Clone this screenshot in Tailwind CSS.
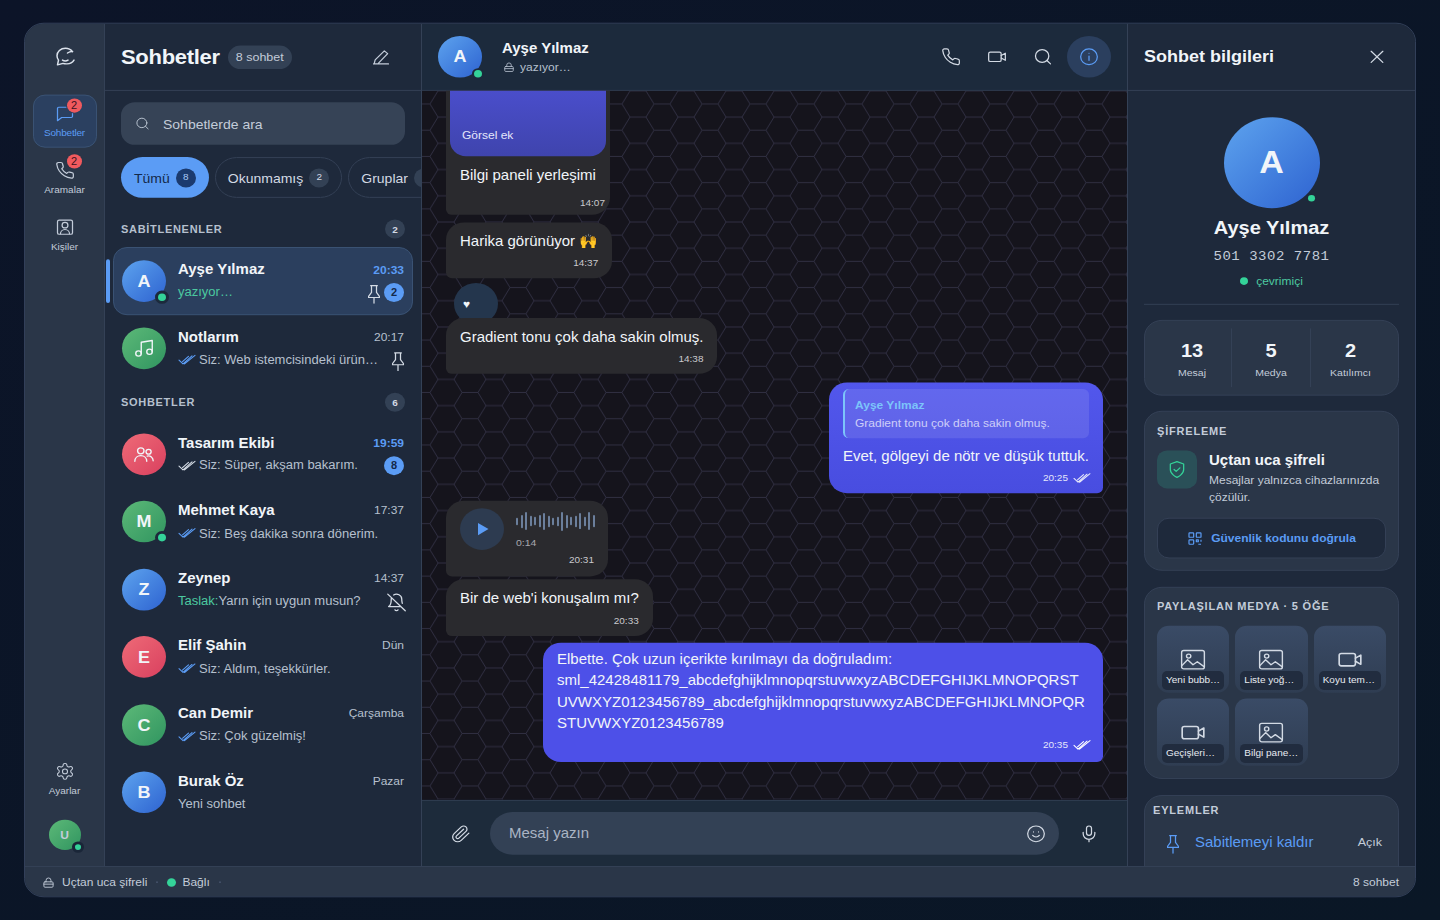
<!doctype html>
<html>

<head>
  <meta charset="UTF-8">
  <meta name="viewport" content="width=device-width, initial-scale=1.0">
  <script src="https://cdn.jsdelivr.net/npm/@tailwindcss/browser@4"></script>
</head>

<body class="bg-[#0b1425]">
  <!-- icons -->
  <svg class="hidden">
    <symbol id="i-logo" viewBox="0 0 24 24" fill="none" stroke="currentColor" stroke-width="1.5" stroke-linecap="round" stroke-linejoin="round"><path d="M19.5 6.5C18 4.500 15.500 3 12.500 3 7.500 3 4 6.500 4 11c0 1.800.6 3.300 1.500 4.500L4.500 20.500l5.500-1.500c1.200.4 2.500.6 4 .5 3-.2 5.500-1.500 7-4"/><path d="M19.500 6.500c-1.500-.2-3.500.5-5 1.500M9.500 15.500c1.500 1 4 1 5.500 0"/></symbol>
    <symbol id="i-chat" viewBox="0 0 24 24" fill="none" stroke="currentColor" stroke-width="1.5" stroke-linejoin="round"><path d="M3 5.500A1.500 1.500 0 0 1 4.500 4h15A1.500 1.500 0 0 1 21 5.500v10a1.500 1.500 0 0 1-1.500 1.500H8l-5 4z"/></symbol>
    <symbol id="i-phone" viewBox="0 0 24 24" fill="none" stroke="currentColor" stroke-width="1.500" stroke-linecap="round" stroke-linejoin="round"><path d="M22 16.920v3a2 2 0 0 1-2.180 2 19.790 19.790 0 0 1-8.630-3.070 19.500 19.500 0 0 1-6-6 19.790 19.790 0 0 1-3.070-8.670A2 2 0 0 1 4.110 2h3a2 2 0 0 1 2 1.720 12.840 12.840 0 0 0 .7 2.810 2 2 0 0 1-.45 2.110L8.090 9.910a16 16 0 0 0 6 6l1.270-1.270a2 2 0 0 1 2.110-.45 12.840 12.840 0 0 0 2.810.7A2 2 0 0 1 22 16.920z"/></symbol>
    <symbol id="i-contact" viewBox="0 0 24 24" fill="none" stroke="currentColor" stroke-width="1.500" stroke-linejoin="round"><rect x="3" y="3" width="18" height="18" rx="2"/><circle cx="12" cy="9.500" r="3.500"/><path d="M6.500 21c0-3.500 2.500-6 5.500-6s5.500 2.500 5.500 6"/></symbol>
    <symbol id="i-gear" viewBox="0 0 24 24" fill="none" stroke="currentColor" stroke-width="1.300" stroke-linejoin="round"><path d="M12.220 2h-.44a2 2 0 0 0-2 2v.18a2 2 0 0 1-1 1.730l-.43.25a2 2 0 0 1-2 0l-.15-.08a2 2 0 0 0-2.730.73l-.22.38a2 2 0 0 0 .73 2.730l.15.1a2 2 0 0 1 1 1.720v.51a2 2 0 0 1-1 1.740l-.15.09a2 2 0 0 0-.73 2.730l.22.38a2 2 0 0 0 2.730.73l.15-.08a2 2 0 0 1 2 0l.43.25a2 2 0 0 1 1 1.730V20a2 2 0 0 0 2 2h.44a2 2 0 0 0 2-2v-.18a2 2 0 0 1 1-1.730l.43-.25a2 2 0 0 1 2 0l.15.08a2 2 0 0 0 2.730-.73l.22-.39a2 2 0 0 0-.73-2.730l-.15-.08a2 2 0 0 1-1-1.740v-.5a2 2 0 0 1 1-1.740l.15-.09a2 2 0 0 0 .73-2.730l-.22-.38a2 2 0 0 0-2.730-.73l-.15.08a2 2 0 0 1-2 0l-.43-.25a2 2 0 0 1-1-1.730V4a2 2 0 0 0-2-2z"/><circle cx="12" cy="12" r="3"/></symbol>
    <symbol id="i-edit" viewBox="0 0 24 24" fill="none" stroke="currentColor" stroke-width="1.500" stroke-linecap="round" stroke-linejoin="round"><path d="M3 21h18M4 20l1-4L16 4.500l4 3.500L9 20"/></symbol>
    <symbol id="i-search" viewBox="0 0 24 24" fill="none" stroke="currentColor" stroke-width="1.500" stroke-linecap="round"><circle cx="11" cy="11" r="8"/><path d="m21 21-4.300-4.300"/></symbol>
    <symbol id="i-pin" viewBox="0 0 24 24" fill="none" stroke="currentColor" stroke-width="1.500" stroke-linecap="round" stroke-linejoin="round"><path d="M8 1h8M9 1v8.500L5.500 14.500V16h13v-1.500L15 9.500V1M12 16v8"/></symbol>
    <symbol id="i-music" viewBox="0 0 24 24" fill="none" stroke="currentColor" stroke-width="1.500" stroke-linecap="round" stroke-linejoin="round"><path d="M9 18V5l12-2v13"/><circle cx="6" cy="18" r="3"/><circle cx="18" cy="16" r="3"/></symbol>
    <symbol id="i-users" viewBox="0 0 24 24" fill="none" stroke="currentColor" stroke-width="1.500" stroke-linecap="round" stroke-linejoin="round"><circle cx="8.500" cy="8" r="3.500"/><circle cx="17" cy="9" r="2.800"/><path d="M2 20c0-4 3-6.500 6.500-6.500S15 16 15 20M15.500 14c3.500-.8 6.500 1.500 6.500 5.500"/></symbol>
    <symbol id="i-belloff" viewBox="0 0 24 24" fill="none" stroke="currentColor" stroke-width="1.500" stroke-linecap="round" stroke-linejoin="round"><path d="M8.700 3A6 6 0 0 1 18 8a21.300 21.300 0 0 0 .6 5M17 17H3s3-2 3-9a4.670 4.670 0 0 1 .3-1.700M10.300 21a1.940 1.940 0 0 0 3.400 0M2 2l20 20"/></symbol>
    <symbol id="i-check2" viewBox="0 0 18 12" fill="none" stroke="currentColor" stroke-width="1.100" stroke-linecap="round" stroke-linejoin="round"><path d="M1 6.500 5 10.500 14 2M6.500 10.500 17 1.500M4.500 8 10.500 2.500"/></symbol>
    <symbol id="i-lock" viewBox="0 0 24 24" fill="none" stroke="currentColor" stroke-width="1.700" stroke-linecap="round" stroke-linejoin="round"><rect x="3.500" y="10.500" width="17" height="10.500" rx="2"/><path d="M7.500 10.500V7.500a4.500 4.500 0 0 1 9 0v3M3.500 15h17"/></symbol>
    <symbol id="i-video" viewBox="0 0 24 24" fill="none" stroke="currentColor" stroke-width="1.500" stroke-linecap="round" stroke-linejoin="round"><rect x="2" y="6" width="15" height="12" rx="2"/><path d="m17 10.500 5-3v9l-5-3"/></symbol>
    <symbol id="i-info" viewBox="0 0 24 24" fill="none" stroke="currentColor" stroke-width="1.500" stroke-linecap="round"><circle cx="12" cy="12" r="10"/><path d="M12 16.500V11M12 7.500h.01"/></symbol>
    <symbol id="i-clip" viewBox="0 0 24 24" fill="none" stroke="currentColor" stroke-width="1.500" stroke-linecap="round" stroke-linejoin="round"><path d="m21.440 11.050-9.190 9.190a6 6 0 0 1-8.490-8.490l8.570-8.570A4 4 0 1 1 18 8.840l-8.590 8.570a2 2 0 0 1-2.830-2.830l8.490-8.480"/></symbol>
    <symbol id="i-smile" viewBox="0 0 24 24" fill="none" stroke="currentColor" stroke-width="1.500" stroke-linecap="round"><circle cx="12" cy="12" r="10"/><path d="M8 14s1.500 2 4 2 4-2 4-2M9 9.500h.01M15 9.500h.01"/></symbol>
    <symbol id="i-mic" viewBox="0 0 24 24" fill="none" stroke="currentColor" stroke-width="1.500" stroke-linecap="round"><rect x="9" y="2" width="6" height="12" rx="3"/><path d="M19 10v2a7 7 0 0 1-14 0v-2M12 19v3"/></symbol>
    <symbol id="i-x" viewBox="0 0 24 24" fill="none" stroke="currentColor" stroke-width="1.500" stroke-linecap="round"><path d="M5 5l14 14M19 5 5 19"/></symbol>
    <symbol id="i-shield" viewBox="0 0 24 24" fill="none" stroke="currentColor" stroke-width="1.500" stroke-linecap="round" stroke-linejoin="round"><path d="M12 22s8-3.500 8-10V5l-8-3-8 3v7c0 6.500 8 10 8 10z"/><path d="m8.500 12 2.500 2.500 4.500-4.500"/></symbol>
    <symbol id="i-qr" viewBox="0 0 24 24" fill="none" stroke="currentColor" stroke-width="1.800" stroke-linejoin="round"><rect x="3" y="3" width="7" height="7" rx="1"/><rect x="14" y="3" width="7" height="7" rx="1"/><rect x="3" y="14" width="7" height="7" rx="1"/><path d="M14 14h3v3h-3zM21 14v3M17 21h4M14 21h.01"/></symbol>
    <symbol id="i-image" viewBox="0 0 24 24" fill="none" stroke="currentColor" stroke-width="1.300" stroke-linejoin="round"><rect x="1.500" y="3" width="21" height="18" rx="2"/><circle cx="8" cy="8.500" r="2"/><path d="m1.500 18 5.500-6 5 5 4-3 6.500 5"/></symbol>
  </svg>

  <div class="h-[920px] overflow-hidden">
  <div class="h-[972px] origin-top scale-y-[0.9465] bg-linear-to-br from-[#0c1428] to-[#0a1726] p-6 font-['Liberation_Sans',sans-serif] text-[#f1f5f9]">
    <div class="flex h-[924px] w-[1392px] flex-col overflow-hidden rounded-[20px] border border-[#33415a] bg-[#1e293b]">
      <div class="flex min-h-0 flex-1">

        <!-- rail -->
        <nav class="flex w-20 shrink-0 flex-col items-center border-r border-[#344156] bg-[#2a3648] text-[#c3ccd9]">
          <div class="flex h-[70px] shrink-0 items-center justify-center">
            <svg class="h-6 w-6 text-[#dbe2ec]"><use href="#i-logo"/></svg>
          </div>
          <div class="mt-[5px] flex flex-col gap-1">
            <a class="relative flex h-14 w-16 flex-col items-center rounded-xl border border-[#3b5374] bg-[#2b4060] pt-[9px] text-[#5b9cf5]">
              <svg class="h-5 w-5"><use href="#i-chat"/></svg>
              <span class="mt-[5px] text-[10px] leading-3 tracking-[-0.2px]">Sohbetler</span>
              <span class="absolute left-[33px] top-[3px] flex h-[15px] w-[15px] items-center justify-center rounded-full bg-[#f05a5e] text-[11px] text-[#3b1220] ring-1 ring-[#2b4060]">2</span>
            </a>
            <a class="relative flex h-14 w-16 flex-col items-center pt-[10px]">
              <svg class="h-5 w-5"><use href="#i-phone"/></svg>
              <span class="mt-[5px] text-[10px] leading-3">Aramalar</span>
              <span class="absolute left-[34px] top-[3px] flex h-[15px] w-[15px] items-center justify-center rounded-full bg-[#f05a5e] text-[11px] text-[#3b1220] ring-1 ring-[#2a3648]">2</span>
            </a>
            <a class="flex h-14 w-16 flex-col items-center pt-[10px]">
              <svg class="h-5 w-5"><use href="#i-contact"/></svg>
              <span class="mt-[5px] text-[10px] leading-3">Kişiler</span>
            </a>
          </div>
          <a class="mt-auto flex h-14 w-16 flex-col items-center pt-[11px]">
            <svg class="h-5 w-5"><use href="#i-gear"/></svg>
            <span class="mt-[5px] text-[10px] leading-3">Ayarlar</span>
          </a>
          <div class="relative mb-[17px] mt-4 flex h-8 w-8 items-center justify-center rounded-full bg-linear-to-br from-[#5cb978] to-[#2f9560] text-xs font-bold">
            U
            <span class="absolute -bottom-[3px] -right-[3px] h-3 w-3 rounded-full border-[3px] border-[#1a2638] bg-[#34d399]"></span>
          </div>
        </nav>

        <!-- chat list -->
        <aside class="flex w-[317px] shrink-0 flex-col overflow-hidden border-r border-[#344156] bg-[#1e293b]">
          <header class="flex h-[71px] shrink-0 items-center border-b border-[#344156] pl-4 pr-[30px]">
            <h1 class="text-[22px] font-bold tracking-[-0.3px]">Sohbetler</h1>
            <span class="ml-2 rounded-full bg-[#334155] px-2 py-[4px] text-[12.5px] leading-[17px] text-[#c3ccd9]">8 sohbet</span>
            <svg class="ml-auto h-5 w-5 text-[#c3ccd9]"><use href="#i-edit"/></svg>
          </header>

          <div class="mx-4 mt-3 flex h-[45px] shrink-0 items-center rounded-[14px] bg-[#364356] pl-[14px] text-sm text-[#c3ccd9]">
            <svg class="h-[15px] w-[15px]"><use href="#i-search"/></svg>
            <span class="ml-[13px]">Sohbetlerde ara</span>
          </div>

          <div class="ml-4 mt-[13px] flex h-[43px] shrink-0 gap-[6px] text-sm">
            <span class="flex shrink-0 items-center gap-[6px] rounded-full bg-[#5b9cf5] pl-[13px] pr-[13px] text-[#14294a]">Tümü <b class="flex h-5 w-5 items-center justify-center rounded-full bg-[#1b3a6e] text-[10px] font-normal text-[#a8c8f5]">8</b></span>
            <span class="flex shrink-0 items-center gap-[6px] rounded-full border border-[#344156] pl-3 pr-3 text-[#d3dae4]">Okunmamış <b class="flex h-5 w-5 items-center justify-center rounded-full bg-[#334155] text-[10px] font-normal">2</b></span>
            <span class="flex shrink-0 items-center gap-[6px] rounded-full border border-[#344156] pl-3 pr-3 text-[#d3dae4]">Gruplar <b class="h-5 w-5 rounded-full bg-[#334155]"></b></span>
          </div>

          <div class="ml-4 mr-4 mt-[12px] flex h-[40px] shrink-0 items-center justify-between pt-[2px] text-[11px] font-bold tracking-[0.7px] text-[#b6c0ce]">
            <span>SABİTLENENLER</span>
            <b class="flex h-5 w-5 items-center justify-center rounded-full bg-[#334155] text-[10px] tracking-normal text-[#d3dae4]">2</b>
          </div>

          <div class="relative">
            <span class="absolute left-[1px] top-[13px] h-[46px] w-1 rounded-full bg-[#5b9cf5]"></span>
            <div class="mx-2 flex h-[71.5px] items-center gap-3 rounded-[14px] border border-[#3b5374] bg-[#2b3f5e] px-2">
              <div class="relative flex h-11 w-11 shrink-0 items-center justify-center rounded-full bg-linear-to-br from-[#5ea3ee] to-[#2f62d0] text-lg font-bold">A
                <span class="absolute -bottom-[2px] -right-[3px] h-[14px] w-[14px] rounded-full border-[3px] border-[#1c2a3c] bg-[#34d399]"></span>
              </div>
              <div class="min-w-0 flex-1">
                <div class="flex h-5 items-center justify-between"><b class="text-[15px]">Ayşe Yılmaz</b><b class="text-xs text-[#5b9cf5]">20:33</b></div>
                <div class="mt-1 flex h-5 items-center text-[13px] text-[#4cc9a0]">yazıyor…
                  <svg class="ml-auto mt-1 h-5 w-5 text-[#d3dae4]"><use href="#i-pin"/></svg>
                  <b class="flex h-5 w-5 items-center justify-center rounded-full bg-[#5b9cf5] text-[11px] text-[#14294a]">2</b>
                </div>
              </div>
            </div>
          </div>

          <div class="mx-2 flex h-[71.5px] shrink-0 items-center gap-3 px-[9px]">
            <div class="flex h-11 w-11 shrink-0 items-center justify-center rounded-full bg-linear-to-br from-[#5cb978] to-[#2f9560]"><svg class="h-[22px] w-[22px]"><use href="#i-music"/></svg></div>
            <div class="min-w-0 flex-1">
              <div class="flex h-5 items-center justify-between"><b class="text-[15px]">Notlarım</b><span class="text-xs text-[#b6c0ce]">20:17</span></div>
              <div class="mt-1 flex h-5 items-center text-[13px] text-[#b6c0ce]"><svg class="mr-[3px] h-3 w-[18px] shrink-0 text-[#5b9cf5]"><use href="#i-check2"/></svg><span class="truncate">Siz: Web istemcisindeki ürün…</span>
                <svg class="-mr-1 ml-auto mt-1 h-5 w-5 shrink-0 text-[#d3dae4]"><use href="#i-pin"/></svg>
              </div>
            </div>
          </div>

          <div class="ml-4 mr-4 flex h-[40px] shrink-0 items-center justify-between pt-[2px] text-[11px] font-bold tracking-[0.7px] text-[#b6c0ce]">
            <span>SOHBETLER</span>
            <b class="flex h-5 w-5 items-center justify-center rounded-full bg-[#334155] text-[10px] tracking-normal text-[#d3dae4]">6</b>
          </div>

          <div class="mx-2 flex h-[71.5px] shrink-0 items-center gap-3 px-[9px]">
            <div class="flex h-11 w-11 shrink-0 items-center justify-center rounded-full bg-linear-to-br from-[#ee6a77] to-[#d93f5f]"><svg class="h-[22px] w-[22px]"><use href="#i-users"/></svg></div>
            <div class="min-w-0 flex-1">
              <div class="flex h-5 items-center justify-between"><b class="text-[15px]">Tasarım Ekibi</b><b class="text-xs text-[#5b9cf5]">19:59</b></div>
              <div class="mt-1 flex h-5 items-center text-[13px] text-[#b6c0ce]"><svg class="mr-[3px] h-3 w-[18px] shrink-0 text-[#d3dae4]"><use href="#i-check2"/></svg>Siz: Süper, akşam bakarım.
                <b class="ml-auto flex h-5 w-5 items-center justify-center rounded-full bg-[#5b9cf5] text-[11px] text-[#14294a]">8</b>
              </div>
            </div>
          </div>

          <div class="mx-2 flex h-[71.5px] shrink-0 items-center gap-3 px-[9px]">
            <div class="relative flex h-11 w-11 shrink-0 items-center justify-center rounded-full bg-linear-to-br from-[#5cb978] to-[#2f9560] text-lg font-bold">M
              <span class="absolute -bottom-[2px] -right-[3px] h-[14px] w-[14px] rounded-full border-[3px] border-[#1e293b] bg-[#34d399]"></span>
            </div>
            <div class="min-w-0 flex-1">
              <div class="flex h-5 items-center justify-between"><b class="text-[15px]">Mehmet Kaya</b><span class="text-xs text-[#b6c0ce]">17:37</span></div>
              <div class="mt-1 flex h-5 items-center text-[13px] text-[#b6c0ce]"><svg class="mr-[3px] h-3 w-[18px] shrink-0 text-[#5b9cf5]"><use href="#i-check2"/></svg>Siz: Beş dakika sonra dönerim.</div>
            </div>
          </div>

          <div class="mx-2 flex h-[71.5px] shrink-0 items-center gap-3 px-[9px]">
            <div class="flex h-11 w-11 shrink-0 items-center justify-center rounded-full bg-linear-to-br from-[#5ea3ee] to-[#2f62d0] text-lg font-bold">Z</div>
            <div class="min-w-0 flex-1">
              <div class="flex h-5 items-center justify-between"><b class="text-[15px]">Zeynep</b><span class="text-xs text-[#b6c0ce]">14:37</span></div>
              <div class="mt-1 flex h-5 items-center text-[13px] text-[#b6c0ce]"><span class="text-[#4cc9a0]">Taslak:</span>Yarın için uygun musun?
                <svg class="-mr-[3px] ml-auto mt-[4px] h-[21px] w-[21px] text-[#d3dae4]"><use href="#i-belloff"/></svg>
              </div>
            </div>
          </div>

          <div class="mx-2 flex h-[71.5px] shrink-0 items-center gap-3 px-[9px]">
            <div class="flex h-11 w-11 shrink-0 items-center justify-center rounded-full bg-linear-to-br from-[#ee6a77] to-[#d93f5f] text-lg font-bold">E</div>
            <div class="min-w-0 flex-1">
              <div class="flex h-5 items-center justify-between"><b class="text-[15px]">Elif Şahin</b><span class="text-xs text-[#b6c0ce]">Dün</span></div>
              <div class="mt-1 flex h-5 items-center text-[13px] text-[#b6c0ce]"><svg class="mr-[3px] h-3 w-[18px] shrink-0 text-[#5b9cf5]"><use href="#i-check2"/></svg>Siz: Aldım, teşekkürler.</div>
            </div>
          </div>

          <div class="mx-2 flex h-[71.5px] shrink-0 items-center gap-3 px-[9px]">
            <div class="flex h-11 w-11 shrink-0 items-center justify-center rounded-full bg-linear-to-br from-[#5cb978] to-[#2f9560] text-lg font-bold">C</div>
            <div class="min-w-0 flex-1">
              <div class="flex h-5 items-center justify-between"><b class="text-[15px]">Can Demir</b><span class="text-xs text-[#b6c0ce]">Çarşamba</span></div>
              <div class="mt-1 flex h-5 items-center text-[13px] text-[#b6c0ce]"><svg class="mr-[3px] h-3 w-[18px] shrink-0 text-[#5b9cf5]"><use href="#i-check2"/></svg>Siz: Çok güzelmiş!</div>
            </div>
          </div>

          <div class="mx-2 flex h-[71.5px] shrink-0 items-center gap-3 px-[9px]">
            <div class="flex h-11 w-11 shrink-0 items-center justify-center rounded-full bg-linear-to-br from-[#5ea3ee] to-[#2f62d0] text-lg font-bold">B</div>
            <div class="min-w-0 flex-1">
              <div class="flex h-5 items-center justify-between"><b class="text-[15px]">Burak Öz</b><span class="text-xs text-[#b6c0ce]">Pazar</span></div>
              <div class="mt-1 flex h-5 items-center text-[13px] text-[#b6c0ce]">Yeni sohbet</div>
            </div>
          </div>
        </aside>

        <!-- conversation -->
        <main class="flex min-w-0 flex-1 flex-col border-r border-[#344156]">
          <header class="flex h-[71px] shrink-0 items-center border-b border-[#344156] bg-[#1c2a3c] px-4">
            <div class="relative flex h-11 w-11 items-center justify-center rounded-full bg-linear-to-br from-[#5ea3ee] to-[#2f62d0] text-lg font-bold">A
              <span class="absolute bottom-0 right-0 h-2 w-2 rounded-full bg-[#34d399] ring-2 ring-[#1c2a3c]"></span>
            </div>
            <div class="ml-5">
              <b class="block text-[15px] leading-5">Ayşe Yılmaz</b>
              <div class="mt-[1px] flex items-center text-xs leading-[18px] text-[#b6c0ce]"><svg class="ml-[1px] mr-[5px] h-3 w-3"><use href="#i-lock"/></svg>yazıyor…</div>
            </div>
            <div class="ml-auto flex gap-[2px] text-[#d3dae4]">
              <span class="flex h-11 w-11 items-center justify-center"><svg class="h-5 w-5"><use href="#i-phone"/></svg></span>
              <span class="flex h-11 w-11 items-center justify-center"><svg class="h-5 w-5"><use href="#i-video"/></svg></span>
              <span class="flex h-11 w-11 items-center justify-center"><svg class="h-5 w-5"><use href="#i-search"/></svg></span>
              <span class="flex h-11 w-11 items-center justify-center rounded-full bg-[#2b3f5e] text-[#5b9cf5]"><svg class="h-5 w-5"><use href="#i-info"/></svg></span>
            </div>
          </header>

          <section class="relative min-h-0 flex-1 overflow-hidden bg-[#15141c]">
            <svg class="absolute inset-0 h-full w-full">
              <defs>
                <pattern id="hex" width="48" height="27.713" patternUnits="userSpaceOnUse">
                  <path d="M0 13.856H8L16 0H32L40 13.856H48M8 13.856 16 27.713M40 13.856 32 27.713M16 27.713H32" fill="none" stroke="#302f42" stroke-width="1"/>
                </pattern>
              </defs>
              <rect width="100%" height="100%" fill="url(#hex)"/>
            </svg>

            <div class="relative flex h-full flex-col items-start justify-end px-6 pb-10 text-[15px] leading-[22.5px] *:shrink-0">
              <div class="w-[164px] rounded-[18px] rounded-bl-[6px] bg-[#2a2a2e] p-1 pb-[6.500px]">
                <div class="flex h-[100px] items-end rounded-[16px] bg-linear-to-b from-[#4f52d8] to-[#3f44ad] px-3 pb-[14px] text-xs leading-4 text-[#e4e6fb]">Görsel ek</div>
                <p class="mt-[9.500px] whitespace-nowrap px-[10px]">Bilgi paneli yerleşimi</p>
                <div class="mr-[1px] mt-3 text-right text-[10px] leading-3 text-[#c9c9cd]">14:07</div>
              </div>
              <div class="mt-[7.500px] rounded-[18px] rounded-bl-[6px] bg-[#2a2a2e] px-[14px] pb-[10px] pt-[9px]">
                <p>Harika görünüyor 🙌</p>
                <div class="mt-[6px] text-right text-[10px] leading-3 text-[#c9c9cd]">14:37</div>
              </div>
              <div class="ml-2 mt-[4.500px] flex h-11 w-11 items-center rounded-full bg-[#24364d] pl-[9px] text-xs leading-none">♥</div>
              <div class="relative -mt-[7px] rounded-[18px] rounded-bl-[6px] bg-[#2a2a2e] px-[14px] pb-[10px] pt-[9px]">
                <p>Gradient tonu çok daha sakin olmuş.</p>
                <div class="mt-[6px] text-right text-[10px] leading-3 text-[#c9c9cd]">14:38</div>
              </div>

              <div class="mt-[9px] w-[274px] self-end rounded-[18px] rounded-br-[6px] bg-linear-to-b from-[#5257ec] to-[#484de0] px-[14px] pb-[7.500px] pt-[7px]">
                <div class="h-[52px] rounded-[6px] border-l-2 border-[#7cc4fa] bg-white/10 pl-[10px] pt-[9px] text-xs leading-[18px]">
                  <b class="block leading-4 text-[#7cc4fa]">Ayşe Yılmaz</b>
                  <span class="mt-[2px] block whitespace-nowrap text-white/70">Gradient tonu çok daha sakin olmuş.</span>
                </div>
                <p class="mt-[7.500px] whitespace-nowrap">Evet, gölgeyi de nötr ve düşük tuttuk.</p>
                <div class="mt-[3px] flex h-[17px] items-center justify-end gap-[5px] text-[10px] leading-3 text-[#e4e6fb]">20:25<svg class="-mr-[2px] h-3 w-[18px]"><use href="#i-check2"/></svg></div>
              </div>

              <div class="mt-2 w-[162px] rounded-[18px] rounded-bl-[6px] bg-[#2a2a2e] px-[14px] pb-[10.500px] pt-2">
                <div class="flex gap-3">
                  <span class="flex h-11 w-11 shrink-0 items-center justify-center rounded-full bg-[#2d3b50]">
                    <svg class="ml-[1px] h-4 w-3 text-[#5b9cf5]" viewBox="0 0 12 16" fill="currentColor"><path d="M1 1.500v13L11.500 8z"/></svg>
                  </span>
                  <div class="pt-1">
                    <div class="flex h-5 items-center gap-[2.500px]">
                      <i class="h-[8px] w-[2px] rounded-full bg-[#6b7f9c]"></i><i class="h-[14px] w-[2px] rounded-full bg-[#6b7f9c]"></i><i class="h-[19px] w-[2px] rounded-full bg-[#6b7f9c]"></i><i class="h-[11px] w-[2px] rounded-full bg-[#6b7f9c]"></i><i class="h-[9px] w-[2px] rounded-full bg-[#6b7f9c]"></i><i class="h-[13px] w-[2px] rounded-full bg-[#6b7f9c]"></i><i class="h-[18px] w-[2px] rounded-full bg-[#6b7f9c]"></i><i class="h-[12px] w-[2px] rounded-full bg-[#6b7f9c]"></i><i class="h-[8px] w-[2px] rounded-full bg-[#6b7f9c]"></i><i class="h-[10px] w-[2px] rounded-full bg-[#6b7f9c]"></i><i class="h-[20px] w-[2px] rounded-full bg-[#6b7f9c]"></i><i class="h-[14px] w-[2px] rounded-full bg-[#6b7f9c]"></i><i class="h-[9px] w-[2px] rounded-full bg-[#6b7f9c]"></i><i class="h-[12px] w-[2px] rounded-full bg-[#6b7f9c]"></i><i class="h-[17px] w-[2px] rounded-full bg-[#6b7f9c]"></i><i class="h-[10px] w-[2px] rounded-full bg-[#6b7f9c]"></i><i class="h-[19px] w-[2px] rounded-full bg-[#6b7f9c]"></i><i class="h-[13px] w-[2px] rounded-full bg-[#6b7f9c]"></i>
                    </div>
                    <div class="mt-[5px] text-[10.500px] leading-[14px] text-[#a8a8ae]">0:14</div>
                  </div>
                </div>
                <div class="mt-[5.500px] text-right text-[10px] leading-3 text-[#c9c9cd]">20:31</div>
              </div>
              <div class="mt-[3.500px] rounded-[18px] rounded-bl-[6px] bg-[#2a2a2e] px-[14px] pb-[10px] pt-[9px]">
                <p>Bir de web'i konuşalım mı?</p>
                <div class="mt-[6px] text-right text-[10px] leading-3 text-[#c9c9cd]">20:33</div>
              </div>

              <div class="mt-[7px] w-[560px] self-end rounded-[18px] rounded-br-[6px] bg-[#4d50e8] px-[14px] pb-[9.500px] pt-[7px]">
                <p class="break-all">Elbette. Çok uzun içerikte kırılmayı da doğruladım:<br>sml_42428481179_abcdefghijklmnopqrstuvwxyzABCDEFGHIJKLMNOPQRST<br>UVWXYZ0123456789_abcdefghijklmnopqrstuvwxyzABCDEFGHIJKLMNOPQR<br>STUVWXYZ0123456789</p>
                <div class="mt-[3px] flex h-[17px] items-center justify-end gap-[5px] text-[10px] leading-3 text-[#e4e6fb]">20:35<svg class="-mr-[2px] h-3 w-[18px] text-white"><use href="#i-check2"/></svg></div>
              </div>
            </div>
          </section>

          <footer class="flex h-[70px] shrink-0 items-center gap-4 border-t border-[#344156] bg-[#1d2b3b] pl-[29px] pr-[28px] text-[#d3dae4]">
            <svg class="mr-[3px] h-5 w-5 shrink-0"><use href="#i-clip"/></svg>
            <div class="flex h-[45px] flex-1 items-center rounded-full bg-[#334155] pl-[19px] pr-[13px] text-[15px] text-[#aab4c4]">Mesaj yazın
              <svg class="ml-auto h-5 w-5 text-[#d3dae4]"><use href="#i-smile"/></svg>
            </div>
            <svg class="ml-[4px] h-5 w-5 shrink-0"><use href="#i-mic"/></svg>
          </footer>
        </main>

        <!-- info panel -->
        <aside class="flex w-[287px] shrink-0 flex-col overflow-hidden bg-[#1e293b]">
          <header class="flex h-[71px] shrink-0 items-center justify-between border-b border-[#344156] pl-4 pr-[28px]">
            <h2 class="text-lg font-bold">Sohbet bilgileri</h2>
            <svg class="h-5 w-5 text-[#d3dae4]"><use href="#i-x"/></svg>
          </header>

          <div class="flex flex-col items-center px-4 pt-7">
            <div class="relative flex h-24 w-24 items-center justify-center rounded-full bg-linear-to-br from-[#5ea3ee] to-[#2f62d0] pb-[2px] text-[34px] font-bold">A
              <span class="absolute bottom-[7px] right-[5px] h-[7px] w-[7px] rounded-full bg-[#34d399]"></span>
            </div>
            <b class="mt-[6px] text-xl leading-7">Ayşe Yılmaz</b>
            <div class="mt-[7px] font-['Liberation_Mono',monospace] text-sm leading-5 tracking-[0.52px] text-[#c3ccd9]">501 3302 7781</div>
            <div class="mt-2 flex items-center gap-2 text-xs leading-4 text-[#4cc9a0]"><span class="h-2 w-2 rounded-full bg-[#34d399]"></span>çevrimiçi</div>
            <div class="mt-4 h-px w-full bg-[#344156]"></div>
          </div>

          <div class="mx-4 mt-4 grid h-20 shrink-0 grid-cols-3 rounded-[18px] border border-[#344156] bg-[#2a3648] px-2 py-2">
            <div class="flex flex-col items-center justify-center border-r border-[#344156]"><b class="text-xl leading-6">13</b><span class="mt-[5px] text-[10.500px] leading-3 text-[#c3ccd9]">Mesaj</span></div>
            <div class="flex flex-col items-center justify-center border-r border-[#344156]"><b class="text-xl leading-6">5</b><span class="mt-[5px] text-[10.500px] leading-3 text-[#c3ccd9]">Medya</span></div>
            <div class="flex flex-col items-center justify-center"><b class="text-xl leading-6">2</b><span class="mt-[5px] text-[10.500px] leading-3 text-[#c3ccd9]">Katılımcı</span></div>
          </div>

          <div class="mx-4 mt-4 h-[169px] shrink-0 rounded-[18px] border border-[#344156] bg-[#2a3648] px-3 pt-[13px]">
            <div class="text-[11px] font-bold leading-4 tracking-[0.8px] text-[#c3ccd9]">ŞİFRELEME</div>
            <div class="mt-[11.500px] flex gap-3">
              <span class="flex h-10 w-10 shrink-0 items-center justify-center rounded-[10px] bg-[#2a5058] text-[#34d399]"><svg class="h-5 w-5"><use href="#i-shield"/></svg></span>
              <div class="min-w-0">
                <b class="block text-[15px] leading-5">Uçtan uca şifreli</b>
                <p class="mt-[2px] text-xs leading-[18px] text-[#c3ccd9]">Mesajlar yalnızca cihazlarınızda çözülür.</p>
              </div>
            </div>
            <div class="mt-[13px] flex h-[43px] items-center justify-center gap-2 rounded-xl border border-[#344156] bg-[#1e293b] pt-[1px] text-xs font-bold text-[#5b9cf5]">
              <svg class="h-4 w-4"><use href="#i-qr"/></svg>Güvenlik kodunu doğrula
            </div>
          </div>

          <div class="mx-4 mt-[17px] h-[203px] shrink-0 rounded-[18px] border border-[#344156] bg-[#2a3648] px-3 pt-3">
            <div class="text-[11px] font-bold leading-4 tracking-[0.8px] text-[#c3ccd9]">PAYLAŞILAN MEDYA · 5 ÖĞE</div>
            <div class="mt-3 grid grid-cols-3 gap-[6px] text-[10px] text-[#e7ebf1]">
              <div class="relative flex h-[71px] items-center justify-center rounded-xl bg-linear-to-b from-[#3a4b66] to-[#2f3d52]"><svg class="h-[26px] w-[26px] text-[#d3dae4]"><use href="#i-image"/></svg><span class="absolute bottom-[3px] left-[5px] right-[5px] h-5 whitespace-nowrap rounded-[5px] bg-[#1e293b]/85 px-1 leading-5">Yeni bubb…</span></div>
              <div class="relative flex h-[71px] items-center justify-center rounded-xl bg-linear-to-b from-[#3a4b66] to-[#2f3d52]"><svg class="h-[26px] w-[26px] text-[#d3dae4]"><use href="#i-image"/></svg><span class="absolute bottom-[3px] left-[5px] right-[5px] h-5 whitespace-nowrap rounded-[5px] bg-[#1e293b]/85 px-1 leading-5">Liste yoğ…</span></div>
              <div class="relative flex h-[71px] items-center justify-center rounded-xl bg-linear-to-b from-[#3a4b66] to-[#2f3d52]"><svg class="h-[26px] w-[26px] text-[#d3dae4]"><use href="#i-video"/></svg><span class="absolute bottom-[3px] left-[5px] right-[5px] h-5 whitespace-nowrap rounded-[5px] bg-[#1e293b]/85 px-1 leading-5">Koyu tem…</span></div>
              <div class="relative flex h-[71px] items-center justify-center rounded-xl bg-linear-to-b from-[#3a4b66] to-[#2f3d52]"><svg class="h-[26px] w-[26px] text-[#d3dae4]"><use href="#i-video"/></svg><span class="absolute bottom-[3px] left-[5px] right-[5px] h-5 whitespace-nowrap rounded-[5px] bg-[#1e293b]/85 px-1 leading-5">Geçişleri…</span></div>
              <div class="relative flex h-[71px] items-center justify-center rounded-xl bg-linear-to-b from-[#3a4b66] to-[#2f3d52]"><svg class="h-[26px] w-[26px] text-[#d3dae4]"><use href="#i-image"/></svg><span class="absolute bottom-[3px] left-[5px] right-[5px] h-5 whitespace-nowrap rounded-[5px] bg-[#1e293b]/85 px-1 leading-5">Bilgi pane…</span></div>
            </div>
          </div>

          <div class="mx-4 mt-[17px] h-[140px] shrink-0 rounded-[18px] border border-[#344156] bg-[#2a3648] px-2 pt-[7px]">
            <div class="text-[11px] font-bold leading-4 tracking-[0.8px] text-[#c3ccd9]">EYLEMLER</div>
            <div class="mt-1 flex h-[44px] items-center pl-[10px] pr-[8px]">
              <svg class="mt-1 h-5 w-5 text-[#5b9cf5]"><use href="#i-pin"/></svg>
              <span class="ml-3 text-[15px] text-[#5b9cf5]">Sabitlemeyi kaldır</span>
              <span class="ml-auto text-[12.500px] text-[#c3ccd9]">Açık</span>
            </div>
          </div>
        </aside>
      </div>

      <!-- status bar -->
      <footer class="flex h-8 shrink-0 items-center border-t border-[#344156] bg-[#2a3648] pl-[17px] pr-4 pt-[1px] text-xs text-[#c3ccd9]">
        <svg class="mr-[7px] h-[13px] w-[13px]"><use href="#i-lock"/></svg>
        <span>Uçtan uca şifreli</span>
        <span class="mx-[9px] h-[2px] w-[2px] rounded-full bg-[#44526a]"></span>
        <span class="mr-[6px] h-[9px] w-[9px] rounded-full bg-[#34d399]"></span>
        <span>Bağlı</span>
        <span class="mx-[9px] h-[2px] w-[2px] rounded-full bg-[#44526a]"></span>
        <span class="ml-auto">8 sohbet</span>
      </footer>
    </div>
  </div>
  </div>
</body>

</html>
